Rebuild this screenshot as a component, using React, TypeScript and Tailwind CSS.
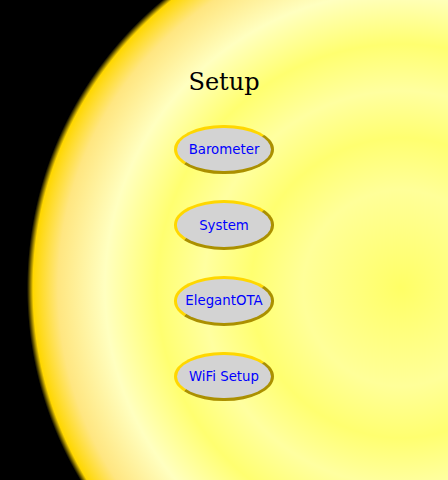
const items = ["Barometer", "System", "ElegantOTA", "WiFi Setup"];

export default function App() {
  return (
    <div className="h-[480px] w-[448px] overflow-hidden bg-[radial-gradient(circle_at_401px_288px,#ffff66_0px,#ffff99_98px,#ffff70_150px,#ffffa0_197px,#ffff70_244px,#ffffc0_296px,#ffe680_343px,#ffd700_368px,#000000_374px)]">
      <div className="flex flex-col items-center pt-[68px]">
        <h1 className="mb-[28.67px] text-[24px] leading-[28px] font-normal text-black [font-family:'DejaVu_Serif',serif]">
          Setup
        </h1>
        <div className="flex flex-col items-center gap-[26px]">
          {items.map((t) => (
            <button
              key={t}
              type="button"
              className="flex h-[49.67px] w-[100px] items-center justify-center rounded-[50%] border-[3px] border-[#ffd700] bg-[#d3d3d3] pt-px text-[13.33px] text-[#0000ff] [border-style:outset] [font-family:'DejaVu_Sans',sans-serif]"
            >
              {t}
            </button>
          ))}
        </div>
      </div>
    </div>
  );
}
